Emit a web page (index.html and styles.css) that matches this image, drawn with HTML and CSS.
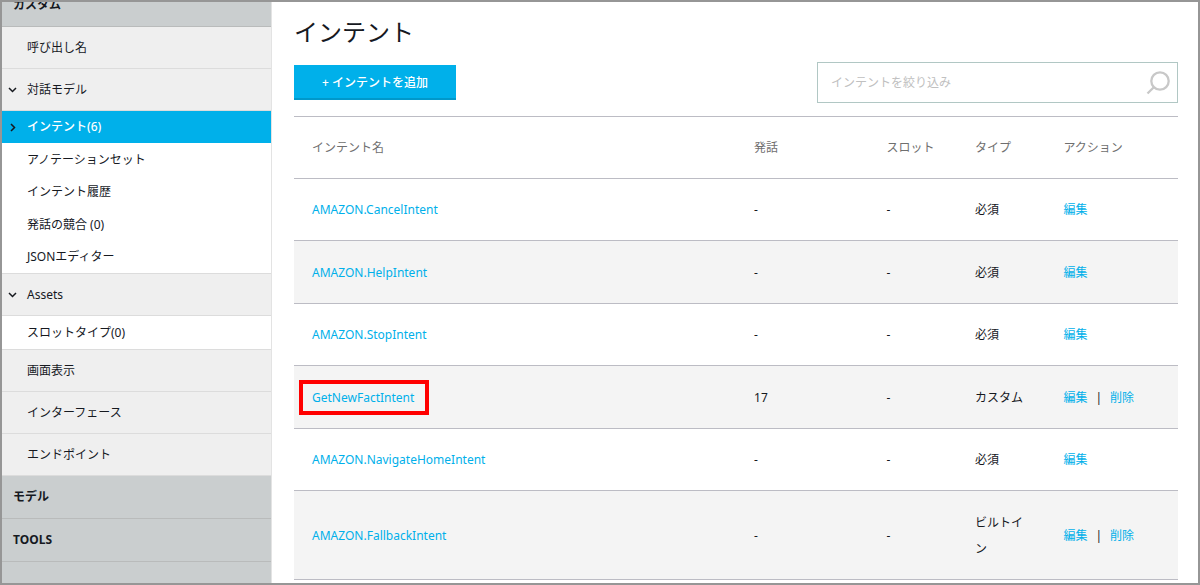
FILE: index.html
```html
<!DOCTYPE html>
<html lang="ja">
<head>
<meta charset="utf-8">
<meta name="viewport" content="width=device-width, initial-scale=1">
<title>インテント</title>
<link rel="stylesheet" href="styles.css">
</head>
<body>
<div class="app">
  <nav class="sidebar" aria-label="スキルのビルド">
    <a class="nav-heading nav-scrolled" href="#custom">カスタム</a>
    <a class="nav-item" href="#invocation">呼び出し名</a>
    <a class="nav-item" href="#model">
      <svg class="chevron" viewBox="0 0 9 9" aria-hidden="true"><path d="M1 3l3.500 3.500L8 3"/></svg>対話モデル</a>
    <div class="nav-group">
      <a class="nav-sub nav-active" href="#intents" aria-current="page">
        <svg class="chevron" viewBox="0 0 9 9" aria-hidden="true"><path d="M3 1l3.500 3.500L3 8"/></svg>インテント(6)</a>
      <a class="nav-sub" href="#annotations">アノテーションセット</a>
      <a class="nav-sub" href="#history">インテント履歴</a>
      <a class="nav-sub" href="#conflicts">発話の競合 (0)</a>
      <a class="nav-sub" href="#json">JSONエディター</a>
    </div>
    <a class="nav-item" href="#assets">
      <svg class="chevron" viewBox="0 0 9 9" aria-hidden="true"><path d="M1 3l3.500 3.500L8 3"/></svg>Assets</a>
    <div class="nav-group">
      <a class="nav-sub" href="#slots">スロットタイプ(0)</a>
    </div>
    <a class="nav-item" href="#display">画面表示</a>
    <a class="nav-item" href="#interfaces">インターフェース</a>
    <a class="nav-item" href="#endpoint">エンドポイント</a>
    <a class="nav-heading" href="#models">モデル</a>
    <a class="nav-heading" href="#tools">TOOLS</a>
  </nav>
  <main class="content">
    <h1 class="title">インテント</h1>
    <div class="toolbar">
      <button class="add-button" type="button">+ インテントを追加</button>
      <div class="search">
        <input class="search-input" type="search" placeholder="インテントを絞り込み" aria-label="インテントを絞り込み">
        <svg class="search-icon" viewBox="0 0 24 24" aria-hidden="true"><circle cx="14" cy="10" r="8.700"/><path d="M7.800 16.200L1.500 22.500"/></svg>
      </div>
    </div>
    <table class="intents">
      <colgroup><col class="col-name"><col class="col-medium"><col class="col-small"><col class="col-small"><col class="col-medium"></colgroup>
      <thead>
        <tr><th scope="col">インテント名</th><th scope="col">発話</th><th scope="col">スロット</th><th scope="col">タイプ</th><th scope="col">アクション</th></tr>
      </thead>
      <tbody>
        <tr><td><a href="#cancel">AMAZON.CancelIntent</a></td><td>-</td><td>-</td><td>必須</td><td><a href="#edit">編集</a></td></tr>
        <tr><td><a href="#help">AMAZON.HelpIntent</a></td><td>-</td><td>-</td><td>必須</td><td><a href="#edit">編集</a></td></tr>
        <tr><td><a href="#stop">AMAZON.StopIntent</a></td><td>-</td><td>-</td><td>必須</td><td><a href="#edit">編集</a></td></tr>
        <tr><td><a class="highlight" href="#fact">GetNewFactIntent</a></td><td>17</td><td>-</td><td>カスタム</td><td><a href="#edit">編集</a><span class="divider">|</span><a href="#delete">削除</a></td></tr>
        <tr><td><a href="#home">AMAZON.NavigateHomeIntent</a></td><td>-</td><td>-</td><td>必須</td><td><a href="#edit">編集</a></td></tr>
        <tr><td><a href="#fallback">AMAZON.FallbackIntent</a></td><td>-</td><td>-</td><td>ビルトイン</td><td><a href="#edit">編集</a><span class="divider">|</span><a href="#delete">削除</a></td></tr>
      </tbody>
    </table>
  </main>
</div>
</body>
</html>
```
FILE: styles.css
```css
* {
  box-sizing: border-box;
}

body {
  margin: 0;
  font: 400 12px/26px "Noto Sans", "Noto Sans CJK JP", sans-serif;
  color: #16191f;
  background: #fff;
}

a {
  color: #00b0ea;
  text-decoration: none;
}

.app {
  display: flex;
  height: 100vh;
  overflow: hidden;
  border: 2px solid #969696;
}

/* Sidebar */
.sidebar {
  flex: none;
  width: 270px;
  overflow: hidden;
  background: #cacecf;
  border-right: 1px solid #e3e3e3;
}

.nav-heading,
.nav-item,
.nav-sub {
  display: flex;
  align-items: center;
  position: relative;
  color: #16191f;
}

.nav-heading {
  height: 43px;
  padding-left: 11px;
  font-weight: 700;
  border-bottom: 1px solid #b9bbbb;
}

/* The list is scrolled a little past its first heading. */
.nav-scrolled {
  margin-top: -18px;
}

.nav-item {
  height: 42px;
  padding-left: 25px;
  background: #efefef;
  border-bottom: 1px solid #dcdcdc;
}

.nav-group {
  background: #fff;
  border-bottom: 1px solid #dcdcdc;
}

.nav-sub {
  height: 32px;
  padding-left: 25px;
}

.nav-sub:nth-child(even),
.nav-sub:only-child {
  height: 33px;
}

.nav-active {
  color: #fff;
  font-weight: 500;
  background: #00b0ea;
}

.chevron {
  position: absolute;
  left: 6px;
  width: 9px;
  height: 9px;
  fill: none;
  stroke: #16191f;
  stroke-width: 1.500;
}

/* Main */
.content {
  flex: 1;
  min-width: 0;
  padding: 12px 20px 0 22px;
}

.title {
  margin: 0;
  font-size: 24px;
  line-height: 36px;
  font-weight: 400;
}

.toolbar {
  display: flex;
  align-items: center;
  justify-content: space-between;
  margin: 12px 0 13px;
}

.add-button {
  height: 35px;
  padding: 2px 28px 0;
  font: inherit;
  font-weight: 500;
  color: #fff;
  background: #00b0ea;
  border: 0;
  border-bottom: 2px solid #0098ca;
}

.search {
  display: flex;
  align-items: center;
  width: 361px;
  height: 41px;
  padding: 0 7px 0 13px;
  border: 1px solid #b1c7c4;
}

.search-input {
  flex: 1;
  min-width: 0;
  padding: 0;
  font: inherit;
  color: #16191f;
  background: none;
  border: 0;
}

.search-input::placeholder {
  color: #c0c0c0;
}

.search-icon {
  width: 24px;
  height: 24px;
  fill: none;
  stroke: #c8c8c8;
  stroke-width: 2.300;
}

.intents {
  width: 100%;
  table-layout: fixed;
  border-spacing: 0;
  border-top: 1px solid #bcbcc4;
}

.col-name {
  width: 50%;
}

.col-medium {
  width: 15%;
}

.col-small {
  width: 10%;
}

.intents th,
.intents td {
  height: 62px;
  padding: 18px 18px 17px;
  text-align: left;
  vertical-align: middle;
  border-bottom: 1px solid #bcbcc4;
}

.intents th {
  font-weight: 400;
  color: #6f6f6f;
}

.intents tbody tr:nth-child(even) {
  background: #f4f4f4;
}

.intents tbody tr:nth-child(even) td {
  padding: 19px 18px 17px;
}

.divider {
  margin: 0 8px;
}

.highlight {
  position: relative;
}

.highlight::after {
  content: "";
  position: absolute;
  inset: -9px -15px -9px -13px;
  border: 4px solid #f00;
}
```
